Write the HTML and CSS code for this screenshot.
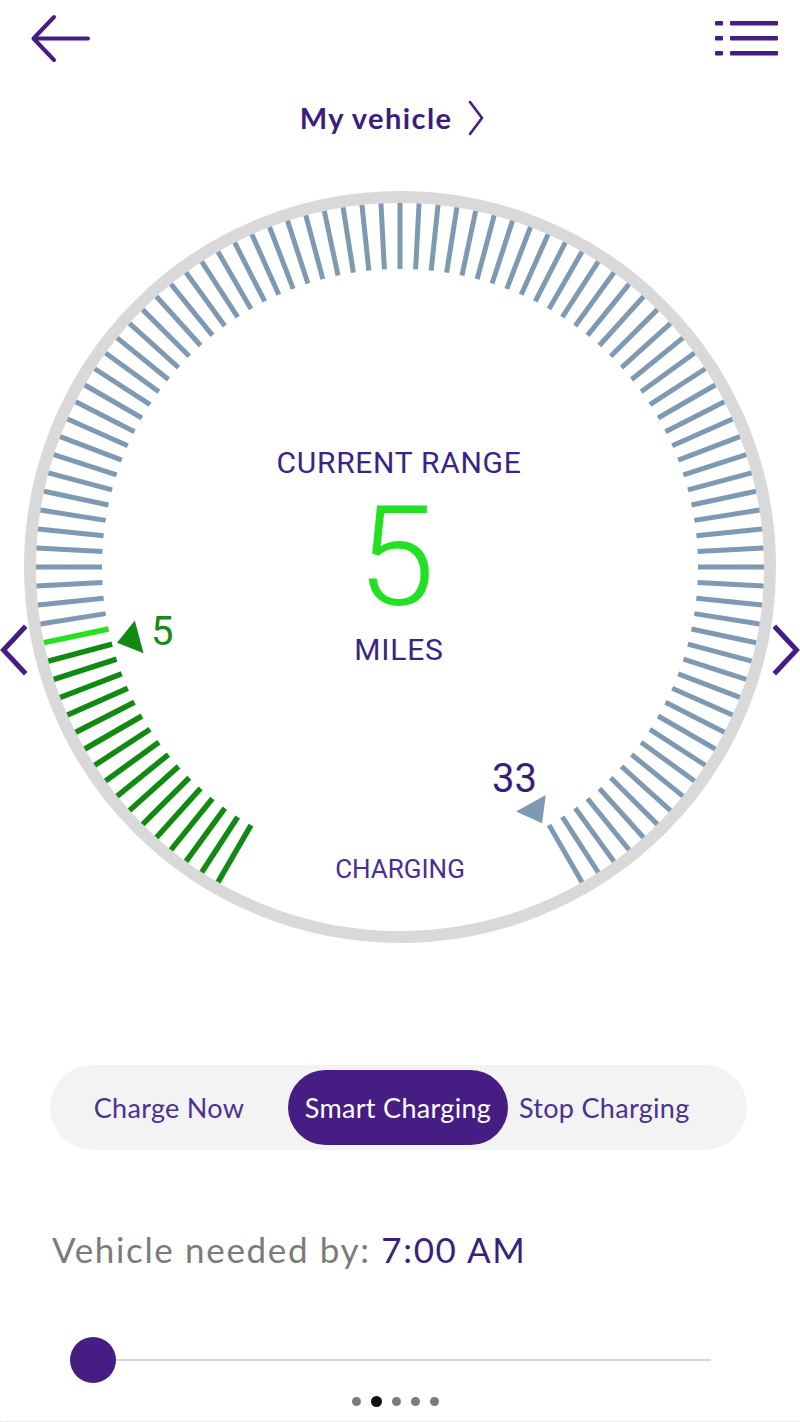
FILE: index.html
```html
<!DOCTYPE html>
<html lang="en">
<head>
<meta charset="utf-8">
<title>My vehicle</title>
<link rel="stylesheet" href="styles.css">
</head>
<body>
<div class="screen">
  <header class="topbar">
    <svg class="back" viewBox="0 0 60 50" aria-label="Back">
      <path d="M58 24.5H4M24 3L3.5 24.5L24 46" fill="none" stroke="#461d83" stroke-width="4" stroke-linecap="round" stroke-linejoin="round"/>
    </svg>
    <svg class="menu" viewBox="0 0 70 40" aria-label="Menu">
      <g fill="#461d83">
        <rect x="3" y="3" width="8" height="4.5" rx="1"/>
        <rect x="18" y="3" width="48" height="4.5" rx="1"/>
        <rect x="3" y="18" width="8" height="4.5" rx="1"/>
        <rect x="18" y="18" width="48" height="4.5" rx="1"/>
        <rect x="3" y="33" width="8" height="4.5" rx="1"/>
        <rect x="18" y="33" width="48" height="4.5" rx="1"/>
      </g>
    </svg>
  </header>

  <div class="title">
    <span>My vehicle</span>
    <svg class="title-chev" viewBox="0 0 16 36"><path d="M2 2L14 18L2 34" fill="none" stroke="#461d83" stroke-width="2.6" stroke-linecap="round" stroke-linejoin="round"/></svg>
  </div>

  <svg class="gauge" viewBox="0 0 800 800">
    <defs>
      <line id="tk" x1="0" y1="298" x2="0" y2="364"/>
      <path id="tri" d="M0 293L-17 270L17 270Z"/>
    </defs>
    <g transform="translate(400 400)">
      <circle r="370" fill="none" stroke="#d9d9d9" stroke-width="12"/>
      <g class="tk-dark" stroke-width="5.5">
        <use href="#tk" transform="rotate(30)"/><use href="#tk" transform="rotate(33)"/><use href="#tk" transform="rotate(36)"/><use href="#tk" transform="rotate(39)"/>
        <use href="#tk" transform="rotate(42)"/><use href="#tk" transform="rotate(45)"/><use href="#tk" transform="rotate(48)"/><use href="#tk" transform="rotate(51)"/>
        <use href="#tk" transform="rotate(54)"/><use href="#tk" transform="rotate(57)"/><use href="#tk" transform="rotate(60)"/><use href="#tk" transform="rotate(63)"/>
        <use href="#tk" transform="rotate(66)"/><use href="#tk" transform="rotate(69)"/><use href="#tk" transform="rotate(72)"/><use href="#tk" transform="rotate(75)"/>
      </g>
      <g class="tk-bright" stroke-width="5.5">
        <use href="#tk" transform="rotate(78)"/>
      </g>
      <g class="tk-blue" stroke-width="5">
        <use href="#tk" transform="rotate(81)"/><use href="#tk" transform="rotate(84)"/><use href="#tk" transform="rotate(87)"/><use href="#tk" transform="rotate(90)"/>
        <use href="#tk" transform="rotate(93)"/><use href="#tk" transform="rotate(96)"/><use href="#tk" transform="rotate(99)"/><use href="#tk" transform="rotate(102)"/>
        <use href="#tk" transform="rotate(105)"/><use href="#tk" transform="rotate(108)"/><use href="#tk" transform="rotate(111)"/><use href="#tk" transform="rotate(114)"/>
        <use href="#tk" transform="rotate(117)"/><use href="#tk" transform="rotate(120)"/><use href="#tk" transform="rotate(123)"/><use href="#tk" transform="rotate(126)"/>
        <use href="#tk" transform="rotate(129)"/><use href="#tk" transform="rotate(132)"/><use href="#tk" transform="rotate(135)"/><use href="#tk" transform="rotate(138)"/>
        <use href="#tk" transform="rotate(141)"/><use href="#tk" transform="rotate(144)"/><use href="#tk" transform="rotate(147)"/><use href="#tk" transform="rotate(150)"/>
        <use href="#tk" transform="rotate(153)"/><use href="#tk" transform="rotate(156)"/><use href="#tk" transform="rotate(159)"/><use href="#tk" transform="rotate(162)"/>
        <use href="#tk" transform="rotate(165)"/><use href="#tk" transform="rotate(168)"/><use href="#tk" transform="rotate(171)"/><use href="#tk" transform="rotate(174)"/>
        <use href="#tk" transform="rotate(177)"/><use href="#tk" transform="rotate(180)"/><use href="#tk" transform="rotate(183)"/><use href="#tk" transform="rotate(186)"/>
        <use href="#tk" transform="rotate(189)"/><use href="#tk" transform="rotate(192)"/><use href="#tk" transform="rotate(195)"/><use href="#tk" transform="rotate(198)"/>
        <use href="#tk" transform="rotate(201)"/><use href="#tk" transform="rotate(204)"/><use href="#tk" transform="rotate(207)"/><use href="#tk" transform="rotate(210)"/>
        <use href="#tk" transform="rotate(213)"/><use href="#tk" transform="rotate(216)"/><use href="#tk" transform="rotate(219)"/><use href="#tk" transform="rotate(222)"/>
        <use href="#tk" transform="rotate(225)"/><use href="#tk" transform="rotate(228)"/><use href="#tk" transform="rotate(231)"/><use href="#tk" transform="rotate(234)"/>
        <use href="#tk" transform="rotate(237)"/><use href="#tk" transform="rotate(240)"/><use href="#tk" transform="rotate(243)"/><use href="#tk" transform="rotate(246)"/>
        <use href="#tk" transform="rotate(249)"/><use href="#tk" transform="rotate(252)"/><use href="#tk" transform="rotate(255)"/><use href="#tk" transform="rotate(258)"/>
        <use href="#tk" transform="rotate(261)"/><use href="#tk" transform="rotate(264)"/><use href="#tk" transform="rotate(267)"/><use href="#tk" transform="rotate(270)"/>
        <use href="#tk" transform="rotate(273)"/><use href="#tk" transform="rotate(276)"/><use href="#tk" transform="rotate(279)"/><use href="#tk" transform="rotate(282)"/>
        <use href="#tk" transform="rotate(285)"/><use href="#tk" transform="rotate(288)"/><use href="#tk" transform="rotate(291)"/><use href="#tk" transform="rotate(294)"/>
        <use href="#tk" transform="rotate(297)"/><use href="#tk" transform="rotate(300)"/><use href="#tk" transform="rotate(303)"/><use href="#tk" transform="rotate(306)"/>
        <use href="#tk" transform="rotate(309)"/><use href="#tk" transform="rotate(312)"/><use href="#tk" transform="rotate(315)"/><use href="#tk" transform="rotate(318)"/>
        <use href="#tk" transform="rotate(321)"/><use href="#tk" transform="rotate(324)"/><use href="#tk" transform="rotate(327)"/><use href="#tk" transform="rotate(330)"/>
      </g>
      <use href="#tri" class="tri-green" transform="rotate(75)"/>
      <use href="#tri" class="tri-blue" transform="rotate(331)"/>
    </g>
    <path class="side-chev" d="M24 461L3.5 483L24 505"/>
    <path class="side-chev" d="M776 461L796.5 483L776 505"/>
    <text class="g-label" x="399" y="306">CURRENT RANGE</text>
    <text class="g-value" x="396" y="438">5</text>
    <text class="g-label g-miles" x="399" y="493">MILES</text>
    <text class="g-status" x="400" y="711">CHARGING</text>
    <text class="g-min" x="151" y="478">5</text>
    <text class="g-max" x="492" y="625">33</text>
  </svg>

  <div class="seg">
    <div class="seg-item">Charge Now</div>
    <div class="seg-item seg-active">Smart Charging</div>
    <div class="seg-item seg-last">Stop Charging</div>
  </div>

  <div class="needed">Vehicle needed by: <span class="time">7:00 AM</span></div>

  <div class="slider">
    <div class="thumb"></div>
    <div class="track"></div>
  </div>

  <div class="dots">
    <span class="dot"></span>
    <span class="dot dot-on"></span>
    <span class="dot"></span>
    <span class="dot"></span>
    <span class="dot"></span>
  </div>
</div>
</body>
</html>
```

FILE: styles.css
```css
html, body {
  margin: 0;
  padding: 0;
  background: #ffffff;
}

body {
  width: 800px;
  height: 1422px;
  overflow: hidden;
  font-family: Lato, "Open Sans", sans-serif;
}

.screen {
  display: flex;
  flex-direction: column;
  width: 800px;
  height: 1422px;
  border-bottom: 1px dotted #e2e2e2;
  box-sizing: border-box;
}

.topbar {
  height: 80px;
  display: flex;
  justify-content: space-between;
  align-items: flex-start;
  flex: none;
}

.back {
  width: 60px;
  height: 50px;
  margin: 14px 0 0 30px;
}

.menu {
  width: 70px;
  height: 40px;
  margin: 18px 18px 0 0;
}

.title {
  margin-top: 18px;
  height: 40px;
  display: flex;
  justify-content: center;
  align-items: center;
  gap: 16px;
  padding-right: 16px;
  font-size: 29px;
  line-height: 40px;
  font-weight: 700;
  letter-spacing: 1.4px;
  color: #3b1d7d;
  flex: none;
}

.title-chev {
  width: 16px;
  height: 36px;
}

.gauge {
  display: block;
  margin-top: 29px;
  width: 800px;
  height: 800px;
  flex: none;
}

.tk-dark { stroke: #118a11; }
.tk-bright { stroke: #22e222; }
.tk-blue { stroke: #7f99b2; }
.tri-green { fill: #118a11; }
.tri-blue { fill: #7f99b2; }

.side-chev {
  fill: none;
  stroke: #461d83;
  stroke-width: 5;
  stroke-linecap: square;
}

.g-label,
.g-status,
.g-value,
.g-min,
.g-max {
  font-family: Roboto, "Liberation Sans", sans-serif;
}

.g-label {
  font-size: 30px;
  letter-spacing: 0.7px;
  fill: #3b2385;
  text-anchor: middle;
}

.g-miles {
  letter-spacing: 0.8px;
}

.g-status {
  font-size: 26px;
  fill: #4a2d92;
  text-anchor: middle;
}

.g-value {
  font-size: 140px;
  font-weight: 300;
  fill: #22e022;
  text-anchor: middle;
}

.g-min {
  font-size: 40px;
  fill: #1a8a1a;
}

.g-max {
  font-size: 40px;
  fill: #3b1d7d;
}

.seg {
  margin: 98px 53px 0 50px;
  height: 85px;
  box-sizing: border-box;
  padding: 5px 0;
  border-radius: 43px;
  background: #f3f3f3;
  display: grid;
  grid-template-columns: 238px 220px 1fr;
  align-items: stretch;
  flex: none;
}

.seg-item {
  display: flex;
  align-items: center;
  justify-content: center;
  font-size: 27px;
  letter-spacing: 0.3px;
  color: #4a3290;
  white-space: nowrap;
}

.seg-active {
  background: #461d83;
  color: #ffffff;
  border-radius: 38px;
}

.seg-last {
  justify-content: flex-start;
  padding-left: 11px;
}

.needed {
  margin-top: 79px;
  padding-left: 52px;
  font-size: 35px;
  line-height: 40px;
  letter-spacing: 1.65px;
  color: #7b7b7b;
  flex: none;
}

.needed .time {
  color: #3b1f7c;
}

.slider {
  margin-top: 68px;
  height: 46px;
  display: flex;
  align-items: center;
  padding-left: 70px;
  flex: none;
}

.thumb {
  width: 46px;
  height: 46px;
  border-radius: 50%;
  background: #461d83;
  flex: none;
}

.track {
  width: 595px;
  height: 2px;
  background: #d6d6d6;
  flex: none;
}

.dots {
  margin-top: 13px;
  display: flex;
  justify-content: center;
  align-items: center;
  gap: 10px;
  padding-right: 10px;
  flex: none;
}

.dot {
  width: 9px;
  height: 9px;
  border-radius: 50%;
  background: #7a7a7a;
}

.dot-on {
  width: 11px;
  height: 11px;
  background: #111111;
}
```
